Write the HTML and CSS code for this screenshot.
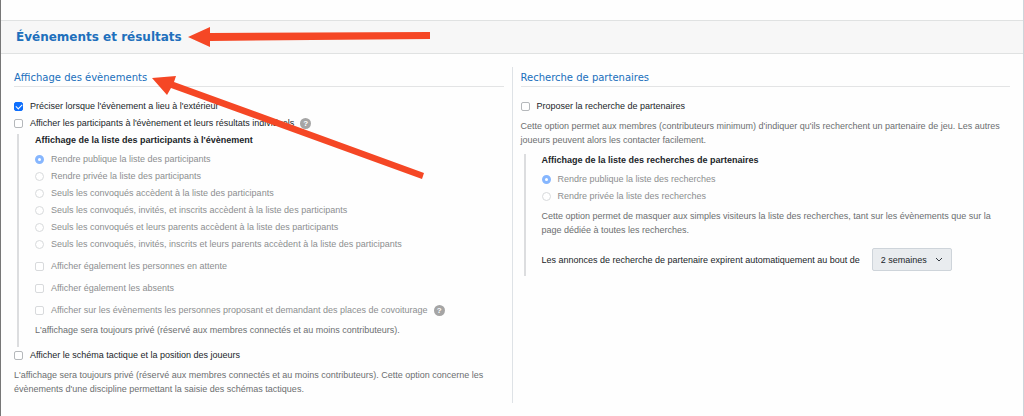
FILE: index.html
```html
<!DOCTYPE html>
<html lang="fr">

<head>
    <meta charset="UTF-8">
    <meta name="viewport" content="width=device-width, initial-scale=1.0">
    <title>Événements et résultats</title>
    <link rel="stylesheet" href="styles.css">
</head>

<body>
    <main class="page">
        <header class="band">
            <h1 class="title">Événements et résultats</h1>
        </header>
        <div class="columns">
            <section class="column">
                <h2 class="subtitle">Affichage des évènements</h2>
                <label class="option"><input type="checkbox" checked>Préciser lorsque l'évènement a lieu à l'extérieur</label>
                <div class="line">
                    <label class="option"><input type="checkbox">Afficher les participants à l'évènement et leurs résultats individuels</label>
                    <button class="help" type="button" aria-label="Aide">?</button>
                </div>
                <div class="nested">
                    <h3 class="group-title">Affichage de la liste des participants à l'évènement</h3>
                    <label class="option"><input type="radio" name="participants" checked disabled>Rendre publique la liste des participants</label>
                    <label class="option"><input type="radio" name="participants" disabled>Rendre privée la liste des participants</label>
                    <label class="option"><input type="radio" name="participants" disabled>Seuls les convoqués accèdent à la liste des participants</label>
                    <label class="option"><input type="radio" name="participants" disabled>Seuls les convoqués, invités, et inscrits accèdent à la liste des participants</label>
                    <label class="option"><input type="radio" name="participants" disabled>Seuls les convoqués et leurs parents accèdent à la liste des participants</label>
                    <label class="option"><input type="radio" name="participants" disabled>Seuls les convoqués, invités, inscrits et leurs parents accèdent à la liste des participants</label>
                    <div class="line spaced">
                        <label class="option"><input type="checkbox" disabled>Afficher également les personnes en attente</label>
                    </div>
                    <div class="line spaced">
                        <label class="option"><input type="checkbox" disabled>Afficher également les absents</label>
                    </div>
                    <div class="line spaced">
                        <label class="option"><input type="checkbox" disabled>Afficher sur les évènements les personnes proposant et demandant des places de covoiturage</label>
                        <button class="help" type="button" aria-label="Aide">?</button>
                    </div>
                    <p class="note">L'affichage sera toujours privé (réservé aux membres connectés et au moins contributeurs).</p>
                </div>
                <label class="option"><input type="checkbox">Afficher le schéma tactique et la position des joueurs</label>
                <p class="note">L'affichage sera toujours privé (réservé aux membres connectés et au moins contributeurs). Cette option concerne les évènements d'une discipline permettant la saisie des schémas tactiques.</p>
            </section>

            <section class="column">
                <h2 class="subtitle">Recherche de partenaires</h2>
                <label class="option"><input type="checkbox">Proposer la recherche de partenaires</label>
                <p class="note">Cette option permet aux membres (contributeurs minimum) d'indiquer qu'ils recherchent un partenaire de jeu. Les autres joueurs peuvent alors les contacter facilement.</p>
                <div class="nested">
                    <h3 class="group-title">Affichage de la liste des recherches de partenaires</h3>
                    <label class="option"><input type="radio" name="recherches" checked disabled>Rendre publique la liste des recherches</label>
                    <label class="option"><input type="radio" name="recherches" disabled>Rendre privée la liste des recherches</label>
                    <p class="note">Cette option permet de masquer aux simples visiteurs la liste des recherches, tant sur les évènements que sur la page dédiée à toutes les recherches.</p>
                    <div class="expiry">
                        <label for="expiry">Les annonces de recherche de partenaire expirent automatiquement au bout de</label>
                        <div class="select-box">
                            <select id="expiry" class="select">
                                <option>2 semaines</option>
                            </select>
                            <svg class="chevron" viewBox="0 0 8 5" aria-hidden="true">
                                <path d="M1 1l3 3 3-3" />
                            </svg>
                        </div>
                    </div>
                </div>
            </section>
        </div>

        <svg class="arrows" width="440" height="190" viewBox="0 0 440 190" aria-hidden="true">
            <path d="M188 37L210 27V33L430 32V39L210 41V47Z" />
            <path d="M152 78L176 76L174 82L424 173L422 179L171 88L167 95Z" />
        </svg>
    </main>
</body>

</html>
```

FILE: styles.css
```css
* {
    box-sizing: border-box;
}

body {
    margin: 0;
    background-color: #fefefe;
    color: #212529;
    font-family: "Liberation Sans", Arial, sans-serif;
    font-size: 9px;
    line-height: 14px;
}

.page {
    position: relative;
    min-height: 100vh;
    padding-top: 20px;
    border-left: 1px solid #777;
    border-right: 1px solid #ced4da;
}

.band {
    padding: 0 15px;
    background-color: #f7f7f7;
    border-top: 1px solid #e0e2e2;
    border-bottom: 1px solid #e0e2e2;
}

.title,
.subtitle {
    margin: 0;
    color: #206fbc;
    font-family: "DejaVu Sans", Verdana, sans-serif;
}

.title {
    font-size: 12px;
    line-height: 32px;
}

.columns {
    display: grid;
    grid-template-columns: 1fr 1fr;
    padding: 13px 5px 13px 4px;
}

.column {
    padding: 0 8px 7px 9px;
}

.column + .column {
    padding-left: 8px;
    border-left: 1px solid #dee2e6;
}

.subtitle {
    margin-bottom: 11px;
    padding-top: 2px;
    border-bottom: 1px solid #e3e4e5;
    font-size: 10px;
    font-weight: 400;
    line-height: 17px;
}

.line {
    display: flex;
    align-items: center;
    gap: 6px;
}

.spaced {
    margin-top: 5px;
}

.option {
    display: flex;
    align-items: center;
    gap: 7px;
    line-height: 17px;
}

.option:has(input:disabled) {
    color: #8c8e90;
}

.option input {
    appearance: none;
    display: grid;
    place-items: center;
    flex: none;
    width: 9px;
    height: 9px;
    margin: 0;
    background-color: #fff;
    border: 1px solid #b5b8bb;
    border-radius: 2px;
}

.option input:disabled {
    border-color: #d8dadc;
}

.option input[type="radio"] {
    border-radius: 50%;
}

.option input[type="checkbox"]:checked {
    background-color: #0d6efd;
    border-color: #0d6efd;
}

.option input[type="checkbox"]:checked::before {
    content: "";
    width: 5px;
    height: 3px;
    border: solid #fff;
    border-width: 0 0 1px 1px;
    transform: translateY(-1px) rotate(-45deg);
}

.option input[type="radio"]:checked {
    border: 3px solid #86b6fe;
}

.help {
    width: 11px;
    height: 11px;
    padding: 0;
    background-color: #a5a5a5;
    border: 0;
    border-radius: 50%;
    color: #fff;
    font: bold 8px/11px "Liberation Sans", Arial, sans-serif;
}

.nested {
    margin: 2px 0 0 3px;
    padding: 0 0 10px 16px;
    border-left: 2px solid #dcdddf;
}

.note + .nested {
    margin-top: 7px;
}

.group-title {
    margin: 0 0 4px;
    font-size: 9px;
    line-height: 13px;
}

.note {
    margin: 4px 0 0;
    color: #6c6e70;
}

.expiry {
    display: flex;
    align-items: center;
    gap: 12px;
    margin: 11px 0 -5px;
}

.select-box {
    position: relative;
}

.select {
    appearance: none;
    display: block;
    width: 80px;
    height: 23px;
    padding: 0 8px;
    background-color: #e9ecef;
    border: 1px solid #ced4da;
    border-radius: 2px;
    color: #212529;
    font: inherit;
}

.chevron {
    position: absolute;
    top: 9px;
    right: 9px;
    width: 8px;
    height: 5px;
    fill: none;
    stroke: #343a40;
    pointer-events: none;
}

/* annotation arrows drawn over the page */
.arrows {
    position: absolute;
    top: 0;
    left: -1px;
    fill: #f54725;
    pointer-events: none;
}
```
